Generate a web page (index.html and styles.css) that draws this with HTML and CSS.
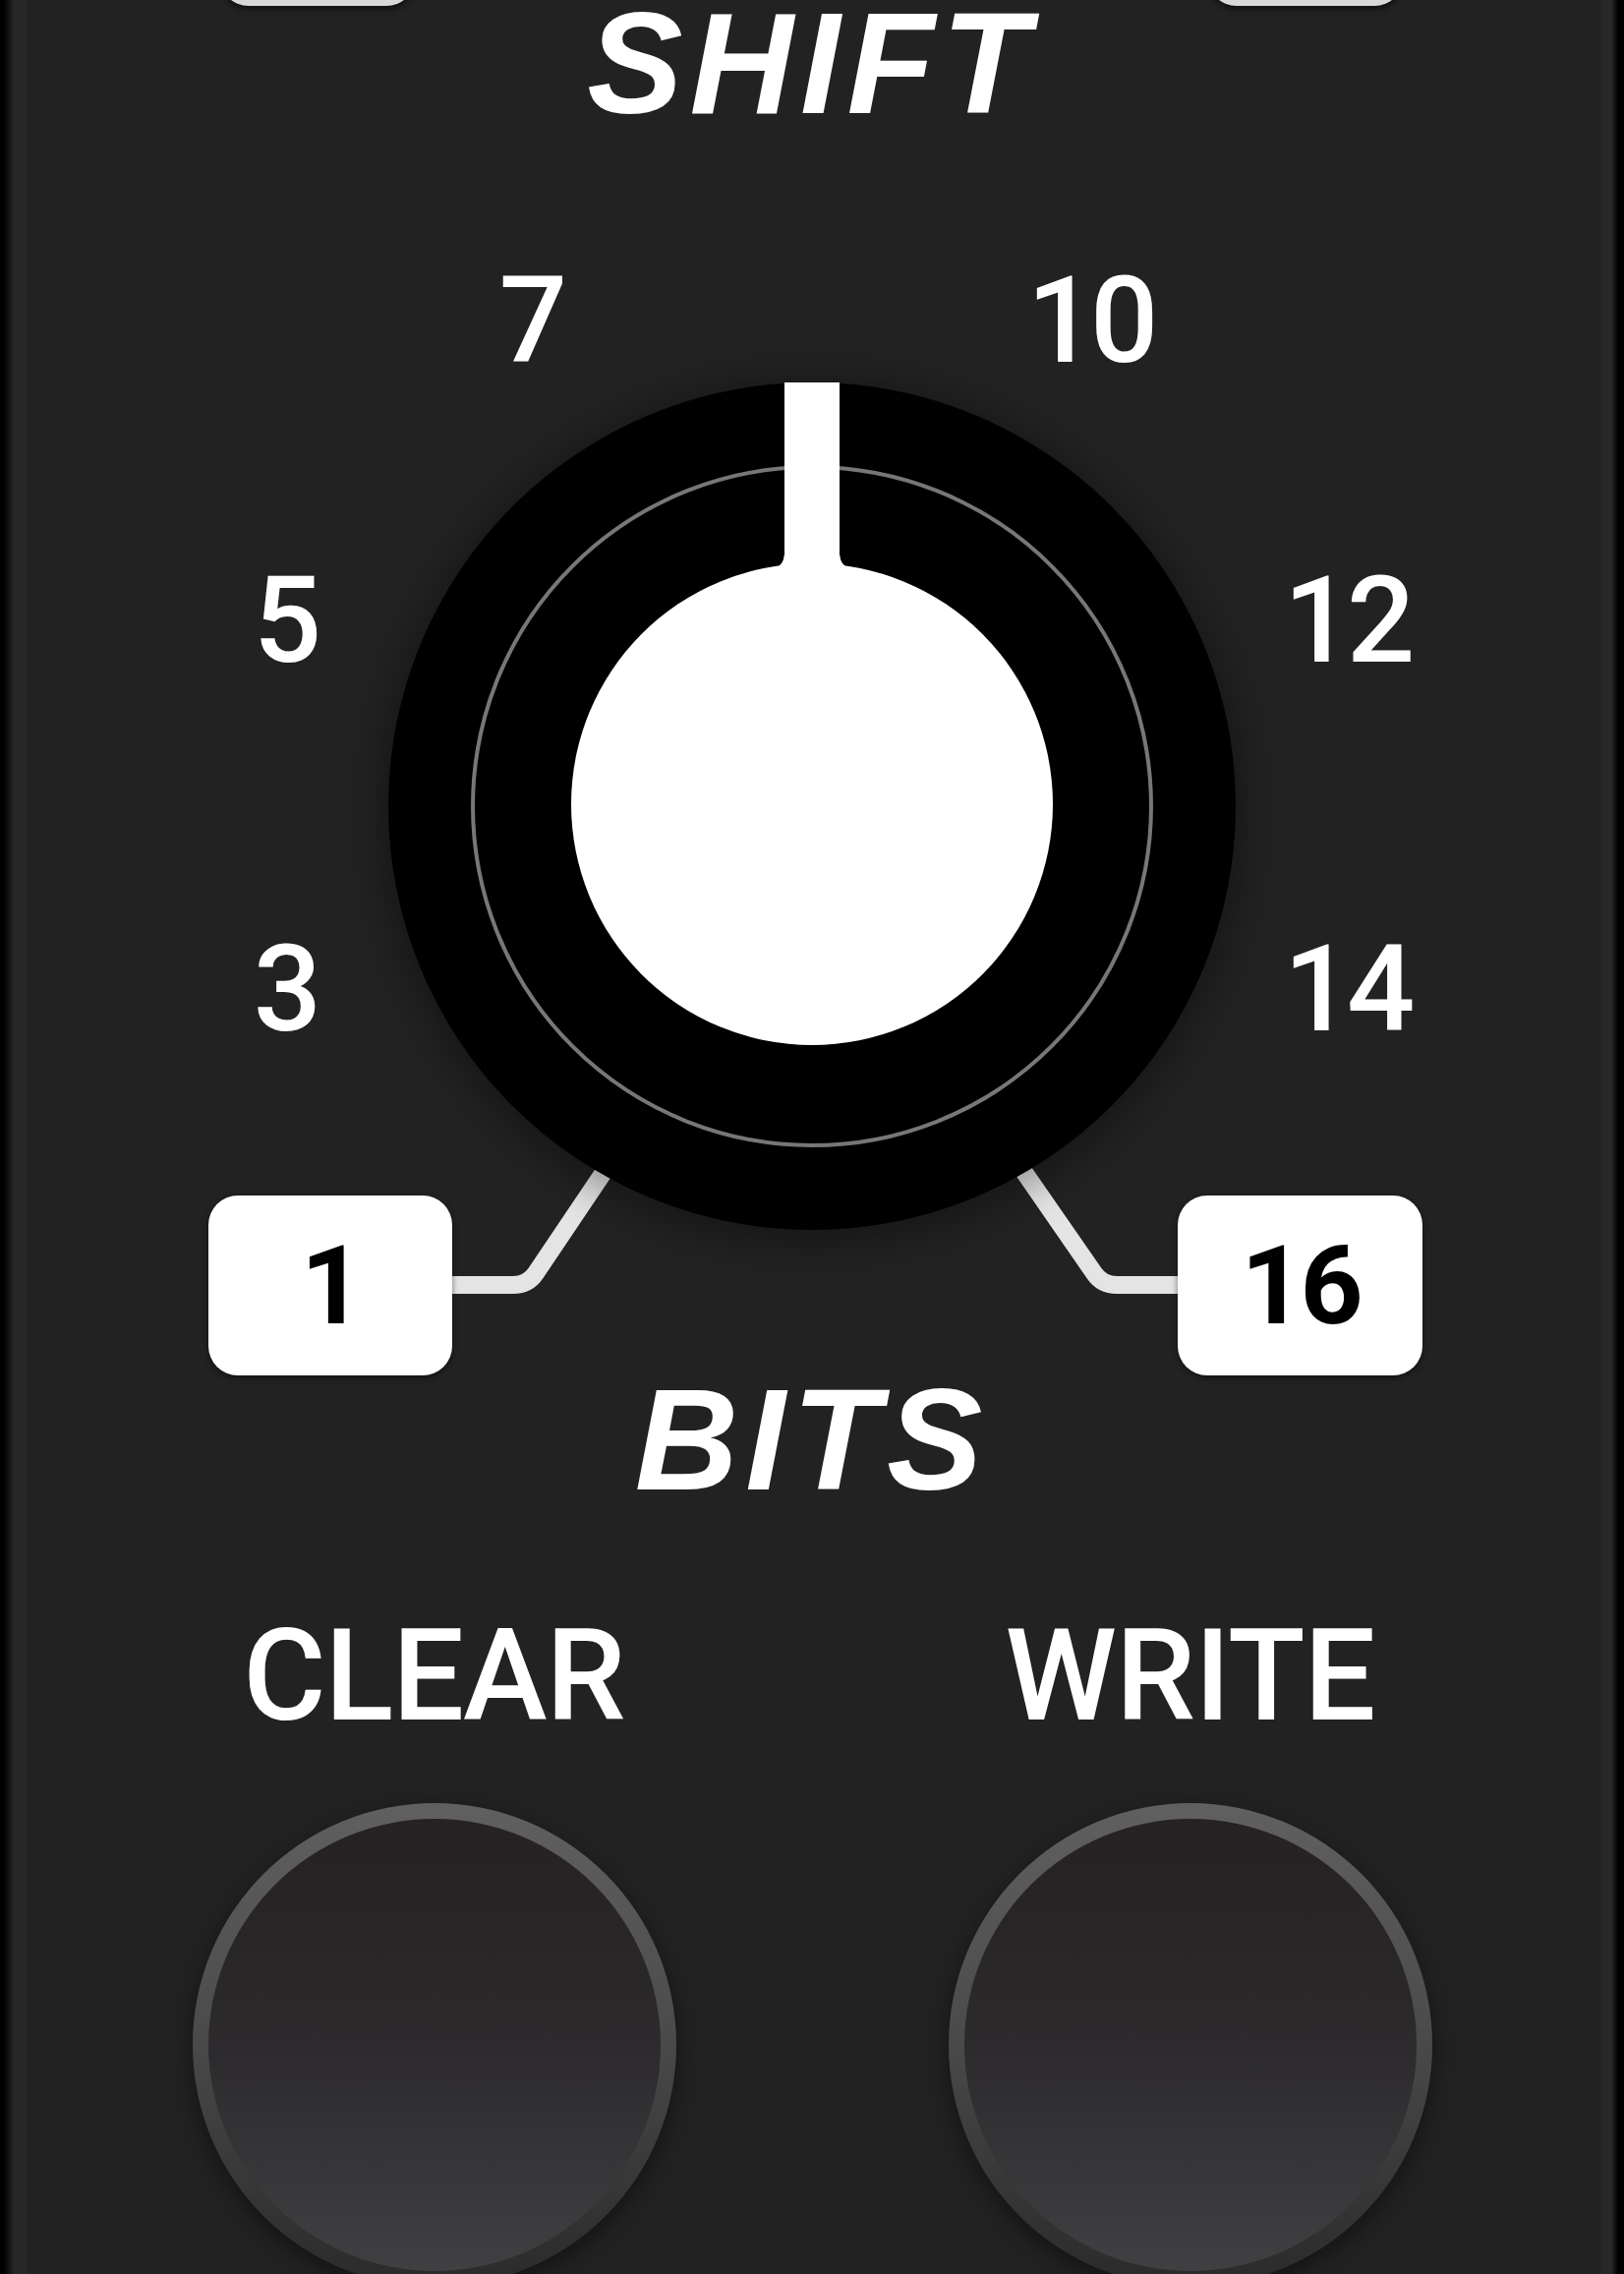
FILE: index.html
```html
<!DOCTYPE html>
<html lang="en">
<head>
    <meta charset="UTF-8">
    <meta name="viewport" content="width=device-width, initial-scale=1.0">
    <title>Shift Register - Bits</title>
    <link rel="stylesheet" href="styles.css">
</head>
<body>
    <div class="panel">
        <div class="header">
            <div class="tab"></div>
            <div class="title">SHIFT</div>
            <div class="tab"></div>
        </div>

        <div class="dial">
            <svg class="leads" width="1652" height="1254" viewBox="0 137 1652 1254">
                <path d="M450 1306 H522 Q537 1306 545 1294 L615 1190"/>
                <path d="M1208 1306 H1136 Q1121 1306 1113 1294 L1041 1190"/>
            </svg>

            <span class="mark mark-7">7</span>
            <span class="mark mark-10">10</span>
            <span class="mark mark-5">5</span>
            <span class="mark mark-12">12</span>
            <span class="mark mark-3">3</span>
            <span class="mark mark-14">14</span>

            <div class="knob">
                <div class="ring"></div>
                <div class="cap"></div>
                <div class="pointer"></div>
            </div>

            <div class="range range-min">1</div>
            <div class="range range-max">16</div>
        </div>

        <div class="title">BITS</div>

        <div class="controls">
            <div class="control">
                <div class="label">CLEAR</div>
                <button class="push"></button>
            </div>
            <div class="control">
                <div class="label">WRITE</div>
                <button class="push"></button>
            </div>
        </div>
    </div>
</body>
</html>
```

FILE: styles.css
```css
body {
    margin: 0;
    background: #000;
    font-family: Roboto, "Liberation Sans", sans-serif;
    color: #fff;
}
.panel {
    width: 1652px;
    height: 2313px;
    overflow: hidden;
    background: linear-gradient(to right,
        #000 0, #000 4px, #222 13px, #272727 14px, #272727 27px, #222 28px,
        #222 1628px, #282828 1629px, #282828 1639px, #000 1646px, #000 100%);
}
.header {
    display: flex;
    justify-content: space-between;
    align-items: flex-start;
    padding: 0 224px 0 223px;
}
.tab {
    width: 200px;
    height: 60px;
    margin-top: -54px;
    background: #d8d8d8;
    border-radius: 30px;
    box-shadow: 0 3px 6px rgba(0, 0, 0, 0.6);
}
.title {
    font-family: "Liberation Sans", Arial, sans-serif;
    font-weight: bold;
    font-style: italic;
    font-size: 146px;
    line-height: 146px;
    letter-spacing: 7px;
    text-align: center;
}
.header .title {
    margin-top: -8px;
}
.dial {
    position: relative;
    padding: 251px 0 141px;
}
.leads {
    position: absolute;
    left: 0;
    top: 0;
}
.leads path {
    fill: none;
    stroke: #e4e4e4;
    stroke-width: 18;
}
.mark {
    position: absolute;
    font-weight: 500;
    font-size: 122px;
    line-height: 1;
    letter-spacing: -5px;
    transform: translate(-50%, -50%);
}
.mark-7 { left: 540px; top: 189px; }
.mark-10 { left: 1109px; top: 189px; }
.mark-5 { left: 290px; top: 494px; }
.mark-12 { left: 1370px; top: 494px; }
.mark-3 { left: 290px; top: 869px; }
.mark-14 { left: 1370px; top: 869px; }

.knob {
    position: relative;
    z-index: 1;
    width: 862px;
    height: 862px;
    margin: 0 auto;
    border-radius: 50%;
    background: #000;
    box-shadow: 0 6px 40px 8px rgba(0, 0, 0, 0.35);
    display: grid;
    place-items: center;
}
.knob > div {
    grid-area: 1 / 1;
}
.ring {
    width: 686px;
    height: 686px;
    border: 4px solid #777;
    border-radius: 50%;
}
.cap {
    width: 490px;
    height: 490px;
    margin-top: -4px;
    border-radius: 50%;
    background: #fff;
}
.pointer {
    position: relative;
    align-self: start;
    width: 56px;
    height: 196px;
    background: #fff;
}
.pointer::before,
.pointer::after {
    content: "";
    position: absolute;
    top: 176px;
    width: 14px;
    height: 16px;
}
.pointer::before {
    left: -14px;
    background: radial-gradient(circle at 0 0, transparent 13px, #fff 14px);
}
.pointer::after {
    right: -14px;
    background: radial-gradient(circle at 100% 0, transparent 13px, #fff 14px);
}
.range {
    position: absolute;
    top: 1078px;
    height: 183px;
    display: flex;
    align-items: center;
    justify-content: center;
    background: #fff;
    color: #000;
    border-radius: 30px;
    font-weight: bold;
    font-size: 112px;
    line-height: 1;
    letter-spacing: -4px;
    box-shadow: 0 2px 6px rgba(0, 0, 0, 0.5);
}
.range-min {
    left: 212px;
    width: 248px;
}
.range-max {
    left: 1198px;
    width: 249px;
}
.controls {
    display: grid;
    grid-template-columns: 492px 492px;
    justify-content: center;
    column-gap: 277px;
    padding-top: 103px;
}
.control {
    display: flex;
    flex-direction: column;
    align-items: center;
}
.label {
    font-weight: 500;
    font-size: 129px;
    line-height: 128px;
    letter-spacing: -1px;
}
.push {
    width: 492px;
    height: 492px;
    margin-top: 65px;
    border-radius: 50%;
    border: 16px solid transparent;
    background:
        linear-gradient(#262123, #2c2a2c 50%, #403f41) padding-box,
        linear-gradient(#606060, #4c4c4c 45%, #2a2a2a) border-box;
    box-shadow: 0 8px 24px rgba(0, 0, 0, 0.45);
    cursor: pointer;
}
```
